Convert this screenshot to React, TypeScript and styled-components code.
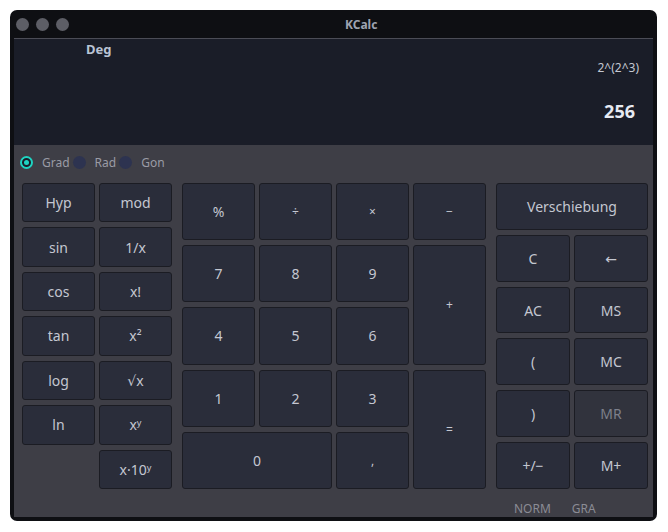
import React from 'react'
import styled, { createGlobalStyle } from 'styled-components'

const GlobalStyle = createGlobalStyle`
    html, body {
        margin: 0;
        padding: 0;
        background: #ffffff;
    }
    body {
        font-family: 'Noto Sans', 'DejaVu Sans', sans-serif;
    }
`

type Key = {
    label: string
    small?: boolean
    dim?: boolean
    col?: number
    colSpan?: number
    rowSpan?: number
}

const sciKeys: Key[] = [
    { label: 'Hyp' },
    { label: 'mod' },
    { label: 'sin' },
    { label: '1/x' },
    { label: 'cos' },
    { label: 'x!' },
    { label: 'tan' },
    { label: 'x²' },
    { label: 'log' },
    { label: '√x' },
    { label: 'ln' },
    { label: 'xʸ' },
    { label: 'x·10ʸ', col: 2 },
]

const numKeys: Key[] = [
    { label: '%' },
    { label: '÷', small: true },
    { label: '×', small: true },
    { label: '−', small: true },
    { label: '7' },
    { label: '8' },
    { label: '9' },
    { label: '+', small: true, rowSpan: 2 },
    { label: '4' },
    { label: '5' },
    { label: '6' },
    { label: '1' },
    { label: '2' },
    { label: '3' },
    { label: '=', small: true, rowSpan: 2 },
    { label: '0', colSpan: 2 },
    { label: ',', small: true },
]

const ctrlKeys: Key[] = [
    { label: 'Verschiebung', colSpan: 2 },
    { label: 'C' },
    { label: '←' },
    { label: 'AC' },
    { label: 'MS' },
    { label: '(' },
    { label: 'MC' },
    { label: ')' },
    { label: 'MR', dim: true },
    { label: '+/−' },
    { label: 'M+' },
]

const App = () => {
    const renderKeys = (keys: Key[]) =>
        keys.map((k, i) => (
            <KeyButton
                key={i}
                $small={k.small}
                $dim={k.dim}
                $col={k.col}
                $colSpan={k.colSpan}
                $rowSpan={k.rowSpan}
            >
                {k.label}
            </KeyButton>
        ))

    return (
        <>
            <GlobalStyle />
            <Window>
                <TitleBar>
                    <Dots>
                        <Dot />
                        <Dot />
                        <Dot />
                    </Dots>
                    <Title>KCalc</Title>
                </TitleBar>
                <Body>
                    <Display>
                        <AngleMode>Deg</AngleMode>
                        <Expression>2^(2^3)</Expression>
                        <Result>256</Result>
                    </Display>
                    <Panel>
                        <RadioRow>
                            <Radio $checked />
                            <RadioLabel>Grad</RadioLabel>
                            <Radio />
                            <RadioLabel>Rad</RadioLabel>
                            <Radio />
                            <RadioLabel>Gon</RadioLabel>
                        </RadioRow>
                        <Keypad>
                            <KeyGroup $cols={2} $rows={7} $width={150}>
                                {renderKeys(sciKeys)}
                            </KeyGroup>
                            <KeyGroup $cols={4} $rows={5} $width={304}>
                                {renderKeys(numKeys)}
                            </KeyGroup>
                            <KeyGroup $cols={2} $rows={6} $width={152}>
                                {renderKeys(ctrlKeys)}
                            </KeyGroup>
                        </Keypad>
                        <StatusBar>
                            <StatusItem>NORM</StatusItem>
                            <StatusItem>GRA</StatusItem>
                        </StatusBar>
                    </Panel>
                </Body>
            </Window>
        </>
    )
}

const Window = styled.div`
    margin: 10px 0 0 10px;
    width: 647px;
    height: 511px;
    background: #0e0f13;
    border-radius: 7px;
    display: flex;
    flex-direction: column;
    overflow: hidden;
`
const TitleBar = styled.header`
    height: 28px;
    display: flex;
    align-items: center;
    flex-shrink: 0;
`
const Dots = styled.div`
    display: flex;
    gap: 7px;
    padding-left: 6px;
`
const Dot = styled.span`
    width: 13px;
    height: 13px;
    border-radius: 50%;
    background: #5d5e66;
`
const Title = styled.span`
    margin-left: 276px;
    font-size: 12px;
    font-weight: 700;
    color: #9ea3b1;
`
const Body = styled.div`
    flex: 1;
    margin: 0 4px 4px;
    display: flex;
    flex-direction: column;
    border-top: 1px solid #4b4c56;
`
const Display = styled.section`
    height: 106px;
    flex-shrink: 0;
    background: #1a1d28;
    display: flex;
    flex-direction: column;
    box-sizing: border-box;
    padding: 1px 0 0;
`
const AngleMode = styled.div`
    padding-left: 72px;
    font-size: 13px;
    font-weight: 700;
    color: #b9c3d4;
    line-height: 18px;
`
const Expression = styled.div`
    text-align: right;
    padding-right: 14px;
    margin-top: 1px;
    font-size: 12px;
    color: #c4c8d2;
    line-height: 18px;
`
const Result = styled.div`
    text-align: right;
    padding-right: 18px;
    margin-top: 22px;
    font-size: 18px;
    font-weight: 700;
    color: #e6eaf2;
    line-height: 24px;
`
const Panel = styled.main`
    flex: 1;
    background: #3e3e46;
    padding: 8px 5px 0 8px;
    display: flex;
    flex-direction: column;
`
const RadioRow = styled.div`
    height: 18px;
    margin: 0 0 12px -2px;
    display: flex;
    align-items: center;
`
const Radio = styled.span<{ $checked?: boolean }>`
    width: 13px;
    height: 13px;
    border-radius: 50%;
    box-sizing: border-box;
    margin-right: 9px;
    background: ${({ $checked }) => ($checked ? '#1a1d28' : '#2d3350')};
    border: ${({ $checked }) => ($checked ? '2px solid #1ed3c1' : 'none')};
    display: flex;
    align-items: center;
    justify-content: center;
    &::after {
        content: '';
        display: ${({ $checked }) => ($checked ? 'block' : 'none')};
        width: 5px;
        height: 5px;
        border-radius: 50%;
        background: #1ed3c1;
    }
`
const RadioLabel = styled.span`
    font-size: 12px;
    color: #9a9ba5;
    margin-right: 3px;
`
const Keypad = styled.div`
    height: 306px;
    display: flex;
    gap: 10px;
`
const KeyGroup = styled.div<{ $cols: number; $rows: number; $width: number }>`
    width: ${({ $width }) => $width}px;
    display: grid;
    grid-template-columns: repeat(${({ $cols }) => $cols}, 1fr);
    grid-template-rows: repeat(${({ $rows }) => $rows}, 1fr);
    column-gap: 4px;
    row-gap: 5px;
`
const KeyButton = styled.button<{
    $small?: boolean
    $dim?: boolean
    $col?: number
    $colSpan?: number
    $rowSpan?: number
}>`
    margin: 0;
    padding: 0;
    font-family: inherit;
    font-size: ${({ $small }) => ($small ? '12px' : '14px')};
    color: ${({ $dim }) => ($dim ? '#7d808b' : '#c4c7d1')};
    background: ${({ $dim }) => ($dim ? '#31333d' : '#2a2d3a')};
    border: 1px solid #1b1c23;
    border-radius: 3px;
    grid-column: ${({ $col, $colSpan }) =>
        $col ? `${$col}` : $colSpan ? `span ${$colSpan}` : 'auto'};
    grid-row: ${({ $rowSpan }) => ($rowSpan ? `span ${$rowSpan}` : 'auto')};
    display: flex;
    align-items: center;
    justify-content: center;
`
const StatusBar = styled.footer`
    flex: 1;
    display: flex;
    align-items: center;
    padding: 10px 0 0 492px;
    gap: 21px;
`
const StatusItem = styled.span`
    font-size: 12px;
    color: #8b8c95;
`

export default App
